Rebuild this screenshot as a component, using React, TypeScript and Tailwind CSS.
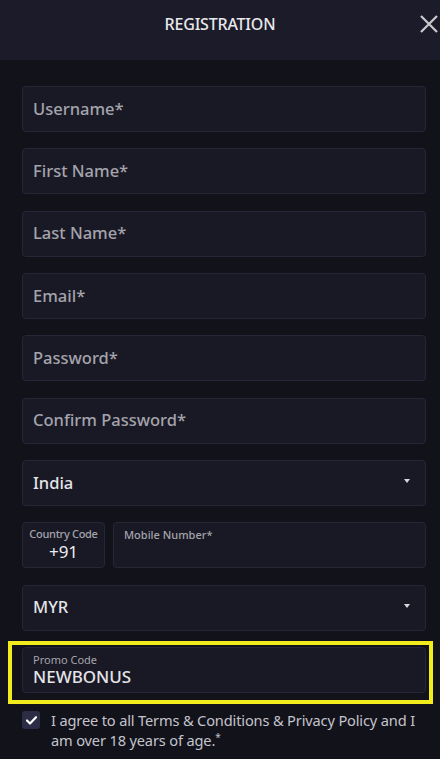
import React from "react";

const font = { fontFamily: '"Noto Sans", "Open Sans", sans-serif' };

function Field({ label }: { label: string }) {
  return (
    <div className="h-[46px] rounded-[4px] border border-[#262636] bg-[#191925] flex items-center px-[10px]">
      <span className="text-[16.5px] font-medium text-[#a4a4ac]">{label}</span>
    </div>
  );
}

function Select({ value }: { value: string }) {
  return (
    <div className="h-[46px] rounded-[4px] border border-[#262636] bg-[#191925] flex items-center justify-between pl-[10px] pr-[15px]">
      <span className="text-[16.5px] font-medium text-[#e4e4e8]">{value}</span>
      <svg width="6" height="4" viewBox="0 0 6 4" className="mb-[4px]">
        <path d="M0 0 L6 0 L3 4 Z" fill="#d8d8de" />
      </svg>
    </div>
  );
}

export default function App() {
  return (
    <div className="min-h-screen bg-[#12121b]" style={font}>
      <div className="h-[60px] bg-[#1c1b29] flex justify-center relative pt-[13px]">
        <span className="text-[16px] leading-[22px] text-[#e8e8ec] font-medium tracking-[-0.2px]">REGISTRATION</span>
        <svg className="absolute right-[2px] top-[15px]" width="18" height="18" viewBox="0 0 18 18">
          <path d="M1 1 L17 17 M17 1 L1 17" stroke="#c9c9cf" strokeWidth="2.2" />
        </svg>
      </div>
      <div className="pl-[22px] pr-[14px] pt-[26px] flex flex-col gap-[16.35px] relative">
        <Field label="Username*" />
        <Field label="First Name*" />
        <Field label="Last Name*" />
        <Field label="Email*" />
        <Field label="Password*" />
        <Field label="Confirm Password*" />
        <Select value="India" />
        <div className="flex gap-[8px] h-[46px]">
          <div className="w-[83px] rounded-[4px] border border-[#262636] bg-[#191925] flex flex-col items-center pt-[4px]">
            <span className="text-[11px] leading-[14px] font-medium text-[#a4a4ac] tracking-[-0.3px]">Country Code</span>
            <span className="text-[17px] leading-[22px] text-[#ececf0]">+91</span>
          </div>
          <div className="flex-1 rounded-[4px] border border-[#262636] bg-[#191925] pl-[10px] pt-[5px]">
            <span className="text-[11px] leading-[14px] font-medium text-[#a4a4ac] block">Mobile Number*</span>
          </div>
        </div>
        <Select value="MYR" />
        <div className="relative">
          <div className="h-[46px] rounded-[4px] border border-[#262636] bg-[#191925] flex flex-col justify-center pl-[10px]">
            <span className="text-[11px] leading-[13px] text-[#a4a4ac]">Promo Code</span>
            <span className="text-[17px] leading-[22px] font-medium text-[#e4e4e8]">NEWBONUS</span>
          </div>
          <div className="absolute left-[-14px] top-[-6px] w-[425px] h-[63px] border-[4px] border-[#f3ec1c] pointer-events-none" />
        </div>
        <div className="flex gap-[11px] mt-[1px] pb-[20px]">
          <div className="w-[18px] h-[18px] shrink-0 rounded-[3px] bg-[#2c2c44] flex items-center justify-center mt-[1px]">
            <svg width="11" height="9" viewBox="0 0 11 9">
              <path d="M1 4.5 L4 7.5 L10 1.2" stroke="#ffffff" strokeWidth="2.2" fill="none" strokeLinecap="round" strokeLinejoin="round" />
            </svg>
          </div>
          <p className="text-[14.6px] leading-[20px] text-[#c4c4cc] tracking-[-0.15px]">
            I agree to all Terms &amp; Conditions &amp; Privacy Policy and I am over 18 years of age.<sup className="text-[10px] leading-none">*</sup>
          </p>
        </div>
      </div>
    </div>
  );
}
